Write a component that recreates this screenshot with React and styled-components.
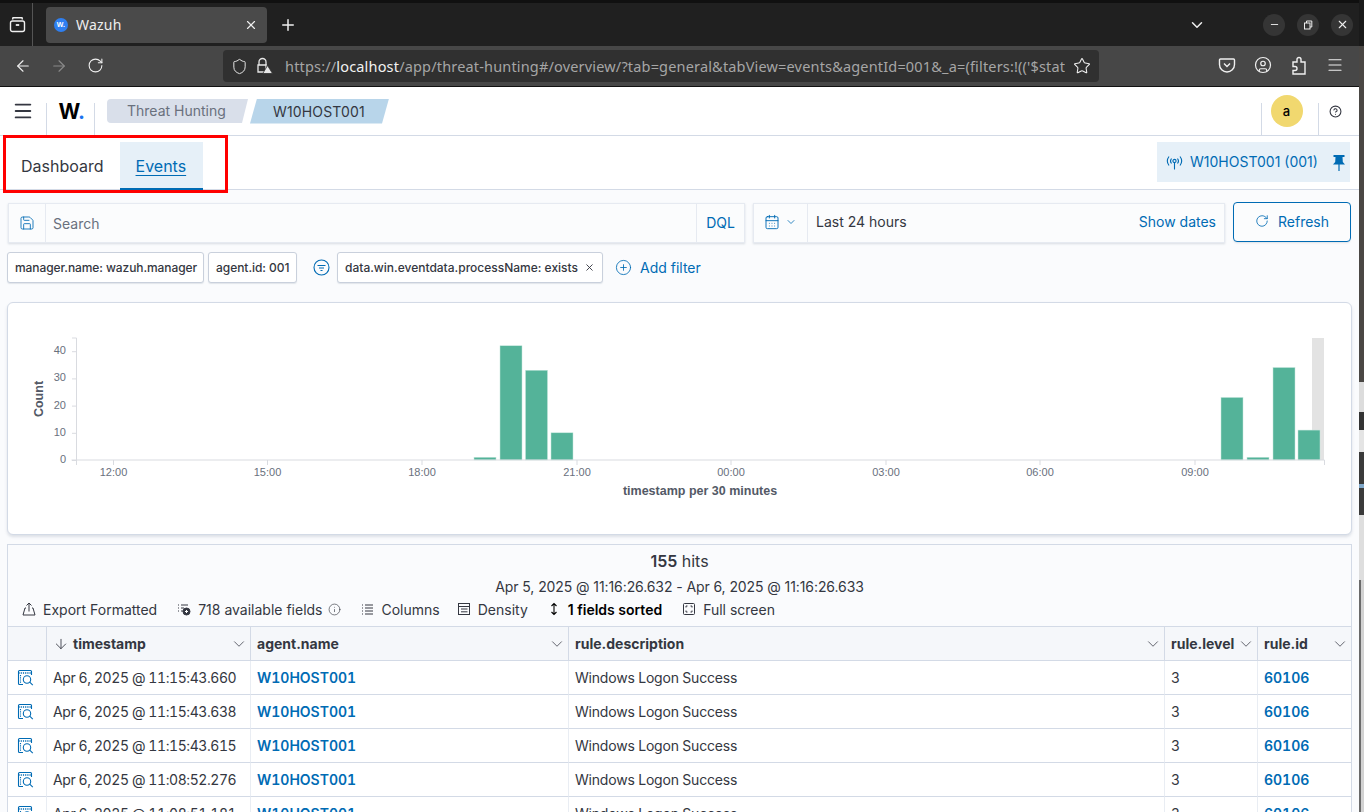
import React from 'react';
import styled, { createGlobalStyle } from 'styled-components';
import {
  ArrowLeft, ArrowRight, RotateCw, Shield, Star, Plus, X, ChevronDown, Minus,
  CircleUser, Menu, Save, CalendarDays, CirclePlus, Info, ArrowDown, HelpCircle,
} from 'lucide-react';

const GlobalStyle = createGlobalStyle`
  html, body {
    margin: 0;
    height: 100%;
    overflow: hidden;
    background: #3a3836;
  }
  * { box-sizing: border-box; }
`;

const Screen = styled.div`
  display: flex;
  width: 1364px;
  height: 812px;
  overflow: hidden;
`;

const Browser = styled.div`
  width: 1359px;
  height: 812px;
  display: flex;
  flex-direction: column;
  overflow: hidden;
  position: relative;
  font-family: Inter, "Liberation Sans", sans-serif;
  font-size: 14px;
  color: #343741;
  background: #fafbfd;
`;

const Desktop = styled.div`
  width: 5px;
  display: flex;
  flex-direction: column;
`;

const DesktopBand = styled.div`
  height: ${(p) => p.$h}px;
  background: ${(p) => p.$c};
  border-left: ${(p) => (p.$edge ? '2px solid #6a6a6a' : 'none')};
`;

/* browser chrome */
const TabBar = styled.div`
  height: 46px;
  flex: none;
  background: #202020;
  border-top: 3px solid #101010;
  display: flex;
  align-items: center;
  color: #eee;
  font-family: "Noto Sans", sans-serif;
`;

const TabsButton = styled.div`
  width: 33px;
  height: 43px;
  display: flex;
  align-items: center;
  justify-content: center;
  border-right: 1px solid #555;
  margin-right: 13px;
  padding-left: 3px;
`;

const BrowserTab = styled.div`
  width: 221px;
  height: 36px;
  background: #4a4a4a;
  border-radius: 4px;
  display: flex;
  align-items: center;
  padding: 0 9px 0 8px;
  gap: 8px;
  font-size: 14px;
  letter-spacing: 0.2px;

  span { flex: 1; padding-bottom: 1px; }
`;

const Favicon = styled.div`
  width: 14px;
  height: 14px;
  border-radius: 50%;
  background: #2f7ff0;
  color: #fff;
  font: 700 7px "Liberation Sans", sans-serif;
  display: flex;
  align-items: center;
  justify-content: center;
`;

const NewTab = styled.div`
  margin-left: 12px;
  display: flex;
`;

const WindowControls = styled.div`
  margin-left: auto;
  display: flex;
  align-items: center;
  padding-right: 6px;
`;

const ListAllTabs = styled.div`
  display: flex;
  margin-right: 45px;
`;

const WindowButton = styled.div`
  width: 22px;
  height: 22px;
  border-radius: 50%;
  background: #353535;
  margin-left: 12px;
  display: flex;
  align-items: center;
  justify-content: center;
`;

const NavBar = styled.div`
  height: 41px;
  flex: none;
  background: #474747;
  border-bottom: 1px solid #111;
  display: flex;
  align-items: center;
  color: #f0f0f0;
  padding-left: 15px;
  font-family: "Noto Sans", sans-serif;
`;

const NavIcon = styled.div`
  width: 36px;
  display: flex;
  justify-content: center;
  flex: none;
  color: ${(p) => (p.$dim ? '#8a8a8a' : '#f0f0f0')};
`;

const NavGroup = styled.div`
  display: flex;
  width: 88px;
  margin-left: -10px;
  margin-right: 130px;
  flex: none;
`;

const UrlBar = styled.div`
  width: 876px;
  height: 32px;
  background: #303030;
  border-radius: 4px;
  display: flex;
  align-items: center;
  padding: 0 8px;
  gap: 8px;
  flex: none;
`;

const UrlText = styled.div`
  flex: 1;
  margin-left: 4px;
  white-space: nowrap;
  overflow: hidden;
  font-size: 14.5px;
  color: #a6a6a6;
  letter-spacing: 0.17px;
  b { font-weight: 400; color: #f2f2f2; }
`;

const NavRight = styled.div`
  display: flex;
  margin-left: 110px;
  gap: 0;
`;

/* app header */
const AppHeader = styled.div`
  height: 49px;
  flex: none;
  background: #fff;
  border-bottom: 1px solid #d3dae6;
  display: flex;
`;

const HeaderCell = styled.div`
  width: ${(p) => p.$w}px;
  border-right: ${(p) => (p.$line ? '1px solid #d3dae6' : 'none')};
  border-left: ${(p) => (p.$lineLeft ? '1px solid #d3dae6' : 'none')};
  padding-right: ${(p) => p.$shift || 0}px;
  margin-top: 16px;
  display: flex;
  justify-content: center;
  flex: none;
`;

const HeaderIconBox = styled.div`
  margin-top: -16px;
  height: 48px;
  display: flex;
  align-items: center;
  justify-content: center;
`;

const Logo = styled.div`
  font: 700 21px Inter, "Liberation Sans", sans-serif;
  color: #000;
  letter-spacing: -0.5px;
  margin-left: 2px;
  i { color: #1a73f0; font-style: normal; }
`;

const Crumbs = styled.div`
  display: flex;
  align-items: center;
  margin-left: 12px;
  gap: 2px;
  height: 48px;
`;

const Crumb = styled.div`
  height: ${(p) => (p.$active ? 25 : 24)}px;
  width: ${(p) => (p.$active ? 139 : 141)}px;
  background: ${(p) => (p.$active ? '#b8d5ea' : '#d9dfea')};
  color: ${(p) => (p.$active ? '#343741' : '#69707d')};
  clip-path: ${(p) =>
    p.$active
      ? 'polygon(7px 0, 100% 0, calc(100% - 7px) 100%, 0 100%)'
      : 'polygon(0 0, 100% 0, calc(100% - 6px) 100%, 0 100%)'};
  border-radius: ${(p) => (p.$active ? 0 : '4px 0 0 4px')};
  display: flex;
  align-items: center;
  padding-left: ${(p) => (p.$active ? 23 : 20)}px;
  padding-bottom: ${(p) => (p.$active ? 0 : 1)}px;
  letter-spacing: ${(p) => (p.$active ? '0.15px' : 0)};
  font-size: 14px;
`;

const HeaderRight = styled.div`
  margin-left: auto;
  display: flex;
  padding-right: 7px;
`;

const Avatar = styled.div`
  width: 32px;
  height: 32px;
  border-radius: 50%;
  background: #f1d86f;
  color: #000;
  font-size: 13px;
  font-weight: 500;
  display: flex;
  align-items: center;
  justify-content: center;
`;

/* tabs row */
const TabsRow = styled.div`
  height: 54px;
  flex: none;
  background: #fff;
  border-bottom: 1px solid #d3dae6;
  display: flex;
  padding: 6px 9px 0 5px;
`;

const PageTab = styled.div`
  height: 48px;
  padding: 2px ${(p) => (p.$active ? 17 : 16)}px 0 16px;
  font-size: 16px;
  display: flex;
  align-items: center;
  background: ${(p) => (p.$active ? '#e6f0f8' : 'transparent')};
  color: ${(p) => (p.$active ? '#006bb4' : '#343741')};
  border-bottom: 2px solid ${(p) => (p.$active ? '#006bb4' : 'transparent')};
  span { text-decoration: ${(p) => (p.$active ? 'underline' : 'none')}; text-underline-offset: 3px; }
`;

const AgentPill = styled.div`
  margin-left: auto;
  width: 193px;
  height: 40px;
  background: #e6f0f8;
  color: #006bb4;
  display: flex;
  align-items: center;
  padding: 0 4px 0 9px;
  gap: 7px;
  font-size: 14px;
  span { flex: 1; white-space: nowrap; padding-bottom: 2px; }
`;

const Highlight = styled.div`
  position: absolute;
  left: 3px;
  top: 135px;
  width: 225px;
  height: 58px;
  border: 3px solid #f00;
  pointer-events: none;
`;

/* query bars */
const QueryRow = styled.div`
  display: flex;
  gap: 8px;
  padding: 13px 8px 0 8px;
  height: 53px;
  flex: none;
`;

const FieldBox = styled.div`
  width: ${(p) => p.$w}px;
  height: 40px;
  background: #fbfcfd;
  border: 1px solid #e6eaf1;
  box-shadow: 0 1px 2px rgba(152, 162, 179, 0.35);
  display: flex;
  align-items: center;
  flex: none;
`;

const FieldCell = styled.div`
  height: 100%;
  display: flex;
  align-items: center;
  justify-content: ${(p) => (p.$grow ? 'flex-start' : 'center')};
  flex: ${(p) => (p.$grow ? 1 : 'none')};
  width: ${(p) => (p.$w ? `${p.$w}px` : 'auto')};
  border-right: ${(p) => (p.$line ? '1px solid #e6eaf1' : 'none')};
  padding: 0 ${(p) => p.$pad || 0}px ${(p) => p.$lift || 0}px;
  gap: 5px;
  color: ${(p) => p.$c || '#343741'};
`;

const RefreshButton = styled.div`
  width: 118px;
  height: 40px;
  margin-top: -1px;
  padding-bottom: 2px;
  border: 1px solid #006bb4;
  border-radius: 4px;
  color: #006bb4;
  display: flex;
  align-items: center;
  justify-content: center;
  gap: 9px;
  background: #fbfcfd;
  box-shadow: 0 2px 2px -1px rgba(152, 162, 179, 0.3);
`;

const LinkText = styled.span`
  color: #006bb4;
  margin-left: ${(p) => (p.$right ? 'auto' : 0)};
`;

const FilterRow = styled.div`
  display: flex;
  align-items: center;
  gap: 4px;
  padding: 0 0 0 7px;
  height: 45px;
  margin-top: 2px;
  flex: none;
`;

const FilterPill = styled.div`
  height: 31px;
  width: ${(p) => p.$w}px;
  background: #fff;
  border: 1px solid #c9d0dc;
  border-radius: 3px;
  font-size: 12px;
  font-weight: 500;
  letter-spacing: ${(p) => p.$track || 0}px;
  padding: 0 7px;
  display: flex;
  align-items: center;
  justify-content: space-between;
  white-space: nowrap;
  box-shadow: 0 1px 1px rgba(152, 162, 179, 0.25);
`;

const FilterIcon = styled.div`
  width: 40px;
  margin-right: -8px;
  display: flex;
  justify-content: center;
  color: #006bb4;
`;

const AddFilter = styled.div`
  display: flex;
  align-items: center;
  gap: 8px;
  margin-left: 8px;
  color: #006bb4;
`;

/* chart */
const ChartPanel = styled.div`
  margin: 12px 7px 0 7px;
  width: 1345px;
  height: 233px;
  flex: none;
  background: #fff;
  border: 1px solid #d3dae6;
  border-radius: 6px;
  box-shadow: 0 2px 3px rgba(152, 162, 179, 0.3);
  svg { display: block; }
`;

/* data grid */
const DataPanel = styled.div`
  margin: 9px 7px 0 7px;
  width: 1345px;
  flex: 1;
  background: #fafbfd;
  border: 1px solid #d3dae6;
  border-bottom: none;
  min-height: 0;
  overflow: hidden;
`;

const Hits = styled.div`
  text-align: center;
  font-size: 16px;
  height: 32px;
  padding-top: 6px;
  b { font-weight: 600; }
`;

const RangeText = styled.div`
  text-align: center;
  height: 22px;
  line-height: 19px;
  letter-spacing: -0.09px;
`;

const GridToolbar = styled.div`
  display: flex;
  height: 20px;
  margin-bottom: 7px;
  align-items: center;
  padding-left: 14px;
  gap: 20px;
`;

const ToolbarItem = styled.div`
  display: flex;
  align-items: center;
  gap: 7px;
  margin-left: ${(p) => p.$ml || 0}px;
  font-weight: ${(p) => (p.$bold ? 600 : 400)};
  color: ${(p) => (p.$bold ? '#000' : '#343741')};
  white-space: nowrap;
`;

const InfoMark = styled(Info)`
  margin-left: -2px;
`;

const Grid = styled.div`
  display: grid;
  grid-template-columns: 39px 204px 318px 596px 93px 93px;
  width: 1343px;
  border-top: 1px solid #d3dae6;
`;

const HeadCell = styled.div`
  height: 34px;
  background: #f5f7fa;
  border-bottom: 1px solid #d3dae6;
  border-right: ${(p) => (p.$last ? 'none' : '1px solid #d3dae6')};
  display: flex;
  align-items: center;
  padding: 0 2px 0 6px;
  font-weight: 700;
  gap: 3px;
  span { flex: 1; min-width: 0; white-space: nowrap; }
  svg { flex: none; }
`;

const SortArrow = styled(ArrowDown)`
  margin-right: 1px;
`;

const Cell = styled.div`
  height: 34px;
  border-bottom: 1px solid #d3dae6;
  border-right: ${(p) => (p.$last ? 'none' : '1px solid #e9edf3')};
  background: #fff;
  display: flex;
  align-items: center;
  justify-content: ${(p) => (p.$icon ? 'center' : 'flex-start')};
  padding: ${(p) => (p.$icon ? '0 4px 0 0' : '0 6px')};
  white-space: nowrap;
  color: ${(p) => (p.$link ? '#006bb4' : '#343741')};
  font-weight: ${(p) => (p.$link ? 600 : 400)};
  font-feature-settings: "tnum";
  letter-spacing: ${(p) => p.$track || 0}px;
`;

const TabsGlyph = () => (
  <svg width="17" height="17" viewBox="0 0 17 17" fill="none" stroke="#f0f0f0" strokeWidth="1.4">
    <rect x="1.5" y="5" width="14" height="10.5" rx="2" />
    <path d="M3.5 3.5 L4 1.7 H13 L13.5 3.5" />
    <path d="M6.8 9 H10.2" strokeWidth="1.8" />
  </svg>
);

const LockGlyph = () => (
  <svg width="17" height="18" viewBox="0 0 17 18" fill="none" stroke="#e8e8e8" strokeWidth="1.3">
    <path d="M3 8 V5 a3.5 3.5 0 0 1 7 0 V8" />
    <path d="M2 8 H10 V15 H2 Z" />
    <path d="M11.5 8.5 L16.5 16.5 H6.8 Z" fill="#e8e8e8" stroke="#303030" strokeWidth="0.8" />
  </svg>
);

const PocketGlyph = () => (
  <svg width="18" height="18" viewBox="0 0 18 18" fill="none" stroke="#f0f0f0" strokeWidth="1.4">
    <path d="M2.5 3 H15.5 A1 1 0 0 1 16.5 4 V8.5 A7.5 7.5 0 0 1 1.5 8.5 V4 A1 1 0 0 1 2.5 3 Z" />
    <path d="M6 7.5 L9 10.5 L12 7.5" />
  </svg>
);

const PuzzleGlyph = () => (
  <svg width="18" height="20" viewBox="0 0 18 20" fill="none" stroke="#f0f0f0" strokeWidth="1.4">
    <path d="M3 6 H7 V3.5 a2 2 0 0 1 4 0 V6 H15 V18 H3 V14.5 H5 a2 2 0 0 0 0 -4 H3 Z" />
  </svg>
);

const RestoreGlyph = () => (
  <svg width="10" height="10" viewBox="0 0 10 10" fill="none" stroke="#eee" strokeWidth="1">
    <rect x="1.5" y="3" width="5.5" height="6" />
    <path d="M3.5 3 V1 H8.8 V7 H7" />
  </svg>
);

const ExportGlyph = () => (
  <svg width="14" height="14" viewBox="0 0 14 14" fill="none" stroke="#343741" strokeWidth="1">
    <path d="M4 6 H3 L1 13 H13 L11 6 H10" />
    <path d="M7 9.5 V1 M4.5 3.5 L7 1 L9.5 3.5" />
  </svg>
);

const FieldsGlyph = () => (
  <svg width="14" height="14" viewBox="0 0 14 14" fill="none" stroke="#343741" strokeWidth="1">
    <path d="M1 3 H2 M4 3 H11 M1 6 H2 M4 6 H7 M1 9 H2 M4 9 H6" />
    <circle cx="9.5" cy="9.5" r="3.5" fill="#343741" />
    <path d="M9.5 8 V11 M8 9.5 H11" stroke="#fff" />
  </svg>
);

const ColumnsGlyph = () => (
  <svg width="14" height="14" viewBox="0 0 14 14" fill="none" stroke="#343741" strokeWidth="1">
    <path d="M1 3 H2 M4 3 H12 M1 6 H2 M4 6 H12 M1 9 H2 M4 9 H12 M1 12 H2 M4 12 H12" />
  </svg>
);

const DensityGlyph = () => (
  <svg width="14" height="14" viewBox="0 0 14 14" fill="none" stroke="#343741" strokeWidth="1">
    <rect x="1.5" y="1.5" width="11" height="11" />
    <path d="M1.5 4.5 H12.5 M4 7 H10.5 M4 9.8 H10.5" />
  </svg>
);

const SortGlyph = () => (
  <svg width="14" height="14" viewBox="0 0 14 14" fill="none" stroke="#000" strokeWidth="1.1">
    <path d="M7 1.5 V12.5 M4.5 4 L7 1.5 L9.5 4 M4.5 10 L7 12.5 L9.5 10" />
  </svg>
);

const FullGlyph = () => (
  <svg width="14" height="14" viewBox="0 0 14 14" fill="none" stroke="#343741" strokeWidth="1">
    <rect x="1.5" y="1.5" width="11" height="11" rx="1" />
    <path d="M4 5.5 V4 H5.5 M8.5 4 H10 V5.5 M10 8.5 V10 H8.5 M5.5 10 H4 V8.5" />
  </svg>
);

const FilterGlyph = () => (
  <svg width="17" height="17" viewBox="0 0 17 17" fill="none" stroke="currentColor" strokeWidth="1.1">
    <circle cx="8.5" cy="8.5" r="7.5" />
    <path d="M4.5 6.5 H12.5 M6 9 H11 M7.5 11.5 H9.5" />
  </svg>
);

const InspectGlyph = () => (
  <svg width="17" height="17" viewBox="0 0 17 17" fill="none" stroke="#006bb4" strokeWidth="1.1">
    <path d="M6 15.5 H2.5 a1 1 0 0 1 -1 -1 V2.5 a1 1 0 0 1 1 -1 H13.5 a1 1 0 0 1 1 1 V6" />
    <path d="M1.5 4 H14.5" strokeDasharray="1.2 1" strokeWidth="1.6" />
    <path d="M3.5 6 V14" strokeDasharray="1.2 1" />
    <circle cx="10" cy="10.5" r="3.7" />
    <path d="M12.7 13.2 L15.8 16.2" />
  </svg>
);

const AgentGlyph = () => (
  <svg width="17" height="17" viewBox="0 0 17 17" fill="none" stroke="#006bb4" strokeWidth="1.1">
    <circle cx="8.5" cy="7" r="1.6" />
    <path d="M8.5 8.6 V15.5" />
    <path d="M5.5 4.5 a4 4 0 0 0 0 5 M11.5 4.5 a4 4 0 0 1 0 5" />
    <path d="M3 2.5 a7.5 7.5 0 0 0 0 9 M14 2.5 a7.5 7.5 0 0 1 0 9" />
  </svg>
);

const PinGlyph = () => (
  <svg width="14" height="17" viewBox="0 0 14 17" fill="#006bb4">
    <path d="M1.5 1 H12.5 V3 H10.5 L10.8 8 L13 10.5 H1 L3.2 8 L3.5 3 H1.5 Z" />
    <rect x="6.4" y="10" width="1.2" height="7" />
  </svg>
);

const chartTicksY = [0, 10, 20, 30, 40];
const chartTicksX = [
  ['12:00', 113.5], ['15:00', 267.5], ['18:00', 422], ['21:00', 577],
  ['00:00', 731], ['03:00', 886], ['06:00', 1040], ['09:00', 1195],
];
const chartBars = [
  [474, 22, 1], [500, 22, 42], [525.5, 22, 33], [551, 22, 10],
  [1221, 22, 23], [1247, 22, 1], [1273, 22, 34], [1298, 22, 11],
];
const BASE = 460;
const UNIT = 2.72;

const Histogram = () => (
  <svg width="1343" height="231" viewBox="8 303 1343 231" fontFamily='"Liberation Sans", sans-serif'>
    <rect x="1312" y="338" width="12" height="122" fill="#e3e3e3" />
    {chartBars.map(([x, w, v]) => (
      <rect key={x} x={x} y={BASE - v * UNIT} width={w} height={v * UNIT} fill="#54b399" stroke="#c4e6dc" strokeWidth="0.5" />
    ))}
    <path d="M76.5 338 V465 M71.5 460 H1324.5 M1324.5 460 V465 M72 338 H76.5" stroke="#d9dbe0" fill="none" />
    {chartTicksY.map((t) => (
      <g key={t}>
        <path d={`M72 ${BASE - t * UNIT + 0.5} H76.5`} stroke="#d9dbe0" />
        <text x="66" y={BASE - t * UNIT + 3} textAnchor="end" fontSize="11" fill="#69707d">{t}</text>
      </g>
    ))}
    {chartTicksX.map(([l, x]) => (
      <g key={l}>
        <path d={`M${x} 460 V465`} stroke="#d9dbe0" />
        <text x={x} y="476" textAnchor="middle" fontSize="11" fill="#69707d">{l}</text>
      </g>
    ))}
    <text x="700" y="495" textAnchor="middle" fontSize="12.5" fontWeight="700" fill="#535966">timestamp per 30 minutes</text>
    <text transform="translate(43 399) rotate(-90)" textAnchor="middle" fontSize="12.5" fontWeight="700" fill="#535966">Count</text>
  </svg>
);

const rows = [
  'Apr 6, 2025 @ 11:15:43.660',
  'Apr 6, 2025 @ 11:15:43.638',
  'Apr 6, 2025 @ 11:15:43.615',
  'Apr 6, 2025 @ 11:08:52.276',
  'Apr 6, 2025 @ 11:08:51.181',
];

const columns = ['agent.name', 'rule.description', 'rule.level', 'rule.id'];

const desktopBands = [
  { h: 46, c: '#1a1a1a' },
  { h: 336, c: '#4a4744' },
  { h: 30, c: '#dcdcdc' },
  { h: 18, c: '#333333' },
  { h: 22, c: '#e4e4e4' },
  { h: 32, c: '#3a3a3a' },
  { h: 4, c: '#7fa7c9' },
  { h: 27, c: '#3a3a3a' },
  { h: 65, c: '#dedede' },
  { h: 232, c: '#d2d2d2', edge: true },
];

export default function App() {
  return (
    <Screen>
      <GlobalStyle />
      <Browser>
        <TabBar>
          <TabsButton><TabsGlyph /></TabsButton>
          <BrowserTab>
            <Favicon>W.</Favicon>
            <span>Wazuh</span>
            <X size={14} />
          </BrowserTab>
          <NewTab><Plus size={18} /></NewTab>
          <WindowControls>
            <ListAllTabs><ChevronDown size={18} /></ListAllTabs>
            <WindowButton><Minus size={11} /></WindowButton>
            <WindowButton><RestoreGlyph /></WindowButton>
            <WindowButton><X size={13} /></WindowButton>
          </WindowControls>
        </TabBar>
        <NavBar>
          <NavGroup>
            <NavIcon><ArrowLeft size={18} strokeWidth={1.5} /></NavIcon>
            <NavIcon $dim><ArrowRight size={18} strokeWidth={1.5} /></NavIcon>
            <NavIcon><RotateCw size={17} strokeWidth={1.5} /></NavIcon>
          </NavGroup>
          <UrlBar>
            <Shield size={17} strokeWidth={1.4} color="#e8e8e8" />
            <LockGlyph />
            <UrlText>https://<b>localhost</b>/app/threat-hunting#/overview/?tab=general&amp;tabView=events&amp;agentId=001&amp;_a=(filters:!(('$stat</UrlText>
            <Star size={18} strokeWidth={1.4} color="#f0f0f0" />
          </UrlBar>
          <NavRight>
            <NavIcon><PocketGlyph /></NavIcon>
            <NavIcon><CircleUser size={18} strokeWidth={1.6} /></NavIcon>
            <NavIcon><PuzzleGlyph /></NavIcon>
            <NavIcon><Menu size={18} strokeWidth={1.5} /></NavIcon>
          </NavRight>
        </NavBar>
        <AppHeader>
          <HeaderCell $w={47} $line>
            <HeaderIconBox><Menu size={22} color="#343741" /></HeaderIconBox>
          </HeaderCell>
          <HeaderCell $w={48} $line>
            <HeaderIconBox><Logo>W<i>.</i></Logo></HeaderIconBox>
          </HeaderCell>
          <Crumbs>
            <Crumb>Threat Hunting</Crumb>
            <Crumb $active>W10HOST001</Crumb>
          </Crumbs>
          <HeaderRight>
            <HeaderCell $w={58} $line $lineLeft $shift={7}>
              <HeaderIconBox><Avatar>a</Avatar></HeaderIconBox>
            </HeaderCell>
            <HeaderCell $w={33}>
              <HeaderIconBox><HelpCircle size={13} color="#343741" /></HeaderIconBox>
            </HeaderCell>
          </HeaderRight>
        </AppHeader>
        <TabsRow>
          <PageTab><span>Dashboard</span></PageTab>
          <PageTab $active><span>Events</span></PageTab>
          <AgentPill>
            <AgentGlyph />
            <span>W10HOST001 (001)</span>
            <PinGlyph />
          </AgentPill>
        </TabsRow>
        <Highlight />
        <QueryRow>
          <FieldBox $w={737}>
            <FieldCell $w={37} $line $c="#006bb4"><Save size={16} strokeWidth={1.3} /></FieldCell>
            <FieldCell $grow $line $pad={7} $c="#69707d">Search</FieldCell>
            <FieldCell $w={47} $c="#006bb4" $lift={2}>DQL</FieldCell>
          </FieldBox>
          <FieldBox $w={472}>
            <FieldCell $w={54} $line $c="#006bb4" $lift={2}>
              <CalendarDays size={16} strokeWidth={1.4} />
              <ChevronDown size={12} strokeWidth={1.6} />
            </FieldCell>
            <FieldCell $grow $pad={8} $lift={3}>
              Last 24 hours
              <LinkText $right>Show dates</LinkText>
            </FieldCell>
          </FieldBox>
          <RefreshButton>
            <RotateCw size={14} strokeWidth={1.4} />
            Refresh
          </RefreshButton>
        </QueryRow>
        <FilterRow>
          <FilterPill $w={197} $track={-0.08}>manager.name: wazuh.manager</FilterPill>
          <FilterPill $w={89} $track={-0.04}>agent.id: 001</FilterPill>
          <FilterIcon><FilterGlyph /></FilterIcon>
          <FilterPill $w={266}>data.win.eventdata.processName: exists <X size={11} /></FilterPill>
          <AddFilter>
            <CirclePlus size={17} strokeWidth={1.2} />
            Add filter
          </AddFilter>
        </FilterRow>
        <ChartPanel>
          <Histogram />
        </ChartPanel>
        <DataPanel>
          <Hits><b>155</b> hits</Hits>
          <RangeText>Apr 5, 2025 @ 11:16:26.632 - Apr 6, 2025 @ 11:16:26.633</RangeText>
          <GridToolbar>
            <ToolbarItem><ExportGlyph />Export Formatted</ToolbarItem>
            <ToolbarItem>
              <FieldsGlyph />718 available fields
              <InfoMark size={13} strokeWidth={1.2} />
            </ToolbarItem>
            <ToolbarItem><ColumnsGlyph />Columns</ToolbarItem>
            <ToolbarItem $ml={-3}><DensityGlyph />Density</ToolbarItem>
            <ToolbarItem $ml={-1} $bold><SortGlyph />1 fields sorted</ToolbarItem>
            <ToolbarItem><FullGlyph />Full screen</ToolbarItem>
          </GridToolbar>
          <Grid>
            <HeadCell />
            <HeadCell>
              <SortArrow size={16} strokeWidth={1.3} />
              <span>timestamp</span>
              <ChevronDown size={18} strokeWidth={1} />
            </HeadCell>
            {columns.map((c, i) => (
              <HeadCell key={c} $last={i === columns.length - 1}>
                <span>{c}</span>
                <ChevronDown size={18} strokeWidth={1} />
              </HeadCell>
            ))}
            {rows.map((time) => (
              <React.Fragment key={time}>
                <Cell $icon><InspectGlyph /></Cell>
                <Cell $track={-0.42}>{time}</Cell>
                <Cell $link>W10HOST001</Cell>
                <Cell $track={-0.2}>Windows Logon Success</Cell>
                <Cell>3</Cell>
                <Cell $link $last>60106</Cell>
              </React.Fragment>
            ))}
          </Grid>
        </DataPanel>
      </Browser>
      <Desktop>
        {desktopBands.map((b, i) => (
          <DesktopBand key={i} $h={b.h} $c={b.c} $edge={b.edge} />
        ))}
      </Desktop>
    </Screen>
  );
}
